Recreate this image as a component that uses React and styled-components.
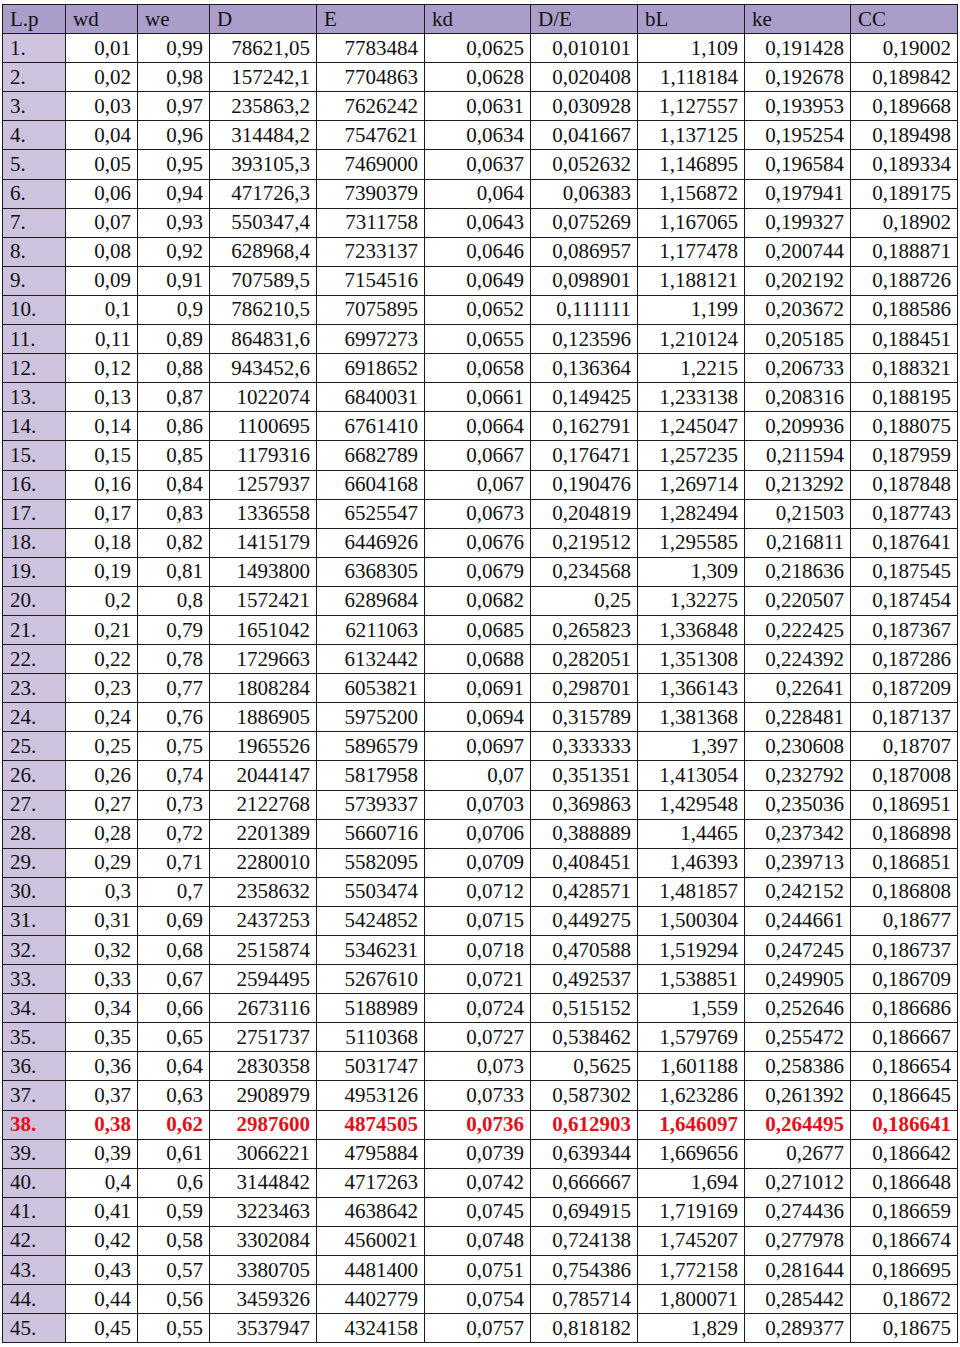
import React from 'react';
import styled, { createGlobalStyle } from 'styled-components';

const GlobalStyle = createGlobalStyle`
  body {
    margin: 0;
    background: #ffffff;
    font-family: "Liberation Serif", "Times New Roman", serif;
  }
`;

const Page = styled.div`
  padding: 4px 0 0 2px;
`;

const Table = styled.table`
  width: 955px;
  table-layout: fixed;
  border-collapse: collapse;
  font-family: "Liberation Serif", "Times New Roman", serif;
  font-size: 21px;
  color: #111;
`;

const Row = styled.tr`
  height: 29.1px;
  color: ${(p) => (p.$hot ? '#e3101a' : '#111')};
  font-weight: ${(p) => (p.$hot ? 700 : 400)};
`;

const HeadCell = styled.th`
  background: #ab9dc9;
  border: 1.5px solid #1c1c1c;
  padding: 0 7px;
  text-align: left;
  font-weight: 400;
  line-height: 1;
  white-space: nowrap;
`;

const IndexCell = styled.td`
  background: #cec3de;
  border: 1.5px solid #1c1c1c;
  padding: 0 7px;
  text-align: left;
  line-height: 1;
  white-space: nowrap;
`;

const Cell = styled.td`
  background: #ffffff;
  border: 1.5px solid #1c1c1c;
  padding: 0 6px 0 0;
  text-align: right;
  line-height: 1;
  white-space: nowrap;
`;

const widths = [63, 72, 72, 107, 108, 106, 107, 107, 106, 107];
const headers = ['L.p', 'wd', 'we', 'D', 'E', 'kd', 'D/E', 'bL', 'ke', 'CC'];

const raw = `0,01 0,99 78621,05 7783484 0,0625 0,010101 1,109 0,191428 0,19002
0,02 0,98 157242,1 7704863 0,0628 0,020408 1,118184 0,192678 0,189842
0,03 0,97 235863,2 7626242 0,0631 0,030928 1,127557 0,193953 0,189668
0,04 0,96 314484,2 7547621 0,0634 0,041667 1,137125 0,195254 0,189498
0,05 0,95 393105,3 7469000 0,0637 0,052632 1,146895 0,196584 0,189334
0,06 0,94 471726,3 7390379 0,064 0,06383 1,156872 0,197941 0,189175
0,07 0,93 550347,4 7311758 0,0643 0,075269 1,167065 0,199327 0,18902
0,08 0,92 628968,4 7233137 0,0646 0,086957 1,177478 0,200744 0,188871
0,09 0,91 707589,5 7154516 0,0649 0,098901 1,188121 0,202192 0,188726
0,1 0,9 786210,5 7075895 0,0652 0,111111 1,199 0,203672 0,188586
0,11 0,89 864831,6 6997273 0,0655 0,123596 1,210124 0,205185 0,188451
0,12 0,88 943452,6 6918652 0,0658 0,136364 1,2215 0,206733 0,188321
0,13 0,87 1022074 6840031 0,0661 0,149425 1,233138 0,208316 0,188195
0,14 0,86 1100695 6761410 0,0664 0,162791 1,245047 0,209936 0,188075
0,15 0,85 1179316 6682789 0,0667 0,176471 1,257235 0,211594 0,187959
0,16 0,84 1257937 6604168 0,067 0,190476 1,269714 0,213292 0,187848
0,17 0,83 1336558 6525547 0,0673 0,204819 1,282494 0,21503 0,187743
0,18 0,82 1415179 6446926 0,0676 0,219512 1,295585 0,216811 0,187641
0,19 0,81 1493800 6368305 0,0679 0,234568 1,309 0,218636 0,187545
0,2 0,8 1572421 6289684 0,0682 0,25 1,32275 0,220507 0,187454
0,21 0,79 1651042 6211063 0,0685 0,265823 1,336848 0,222425 0,187367
0,22 0,78 1729663 6132442 0,0688 0,282051 1,351308 0,224392 0,187286
0,23 0,77 1808284 6053821 0,0691 0,298701 1,366143 0,22641 0,187209
0,24 0,76 1886905 5975200 0,0694 0,315789 1,381368 0,228481 0,187137
0,25 0,75 1965526 5896579 0,0697 0,333333 1,397 0,230608 0,18707
0,26 0,74 2044147 5817958 0,07 0,351351 1,413054 0,232792 0,187008
0,27 0,73 2122768 5739337 0,0703 0,369863 1,429548 0,235036 0,186951
0,28 0,72 2201389 5660716 0,0706 0,388889 1,4465 0,237342 0,186898
0,29 0,71 2280010 5582095 0,0709 0,408451 1,46393 0,239713 0,186851
0,3 0,7 2358632 5503474 0,0712 0,428571 1,481857 0,242152 0,186808
0,31 0,69 2437253 5424852 0,0715 0,449275 1,500304 0,244661 0,18677
0,32 0,68 2515874 5346231 0,0718 0,470588 1,519294 0,247245 0,186737
0,33 0,67 2594495 5267610 0,0721 0,492537 1,538851 0,249905 0,186709
0,34 0,66 2673116 5188989 0,0724 0,515152 1,559 0,252646 0,186686
0,35 0,65 2751737 5110368 0,0727 0,538462 1,579769 0,255472 0,186667
0,36 0,64 2830358 5031747 0,073 0,5625 1,601188 0,258386 0,186654
0,37 0,63 2908979 4953126 0,0733 0,587302 1,623286 0,261392 0,186645
0,38 0,62 2987600 4874505 0,0736 0,612903 1,646097 0,264495 0,186641
0,39 0,61 3066221 4795884 0,0739 0,639344 1,669656 0,2677 0,186642
0,4 0,6 3144842 4717263 0,0742 0,666667 1,694 0,271012 0,186648
0,41 0,59 3223463 4638642 0,0745 0,694915 1,719169 0,274436 0,186659
0,42 0,58 3302084 4560021 0,0748 0,724138 1,745207 0,277978 0,186674
0,43 0,57 3380705 4481400 0,0751 0,754386 1,772158 0,281644 0,186695
0,44 0,56 3459326 4402779 0,0754 0,785714 1,800071 0,285442 0,18672
0,45 0,55 3537947 4324158 0,0757 0,818182 1,829 0,289377 0,18675`;

const rows = raw.split('\n').map((line) => line.trim().split(' '));

// wiersz wyróżniony w oryginale
const HIGHLIGHT = 38;

const App = () => (
  <Page>
    <GlobalStyle />
    <Table>
      <colgroup>
        {widths.map((w, i) => (
          <col key={i} style={{ width: w }} />
        ))}
      </colgroup>
      <thead>
        <Row>
          {headers.map((h) => (
            <HeadCell key={h}>{h}</HeadCell>
          ))}
        </Row>
      </thead>
      <tbody>
        {rows.map((values, i) => (
          <Row key={i} $hot={i + 1 === HIGHLIGHT}>
            <IndexCell>{i + 1}.</IndexCell>
            {values.map((v, j) => (
              <Cell key={j}>{v}</Cell>
            ))}
          </Row>
        ))}
      </tbody>
    </Table>
  </Page>
);

export default App;
